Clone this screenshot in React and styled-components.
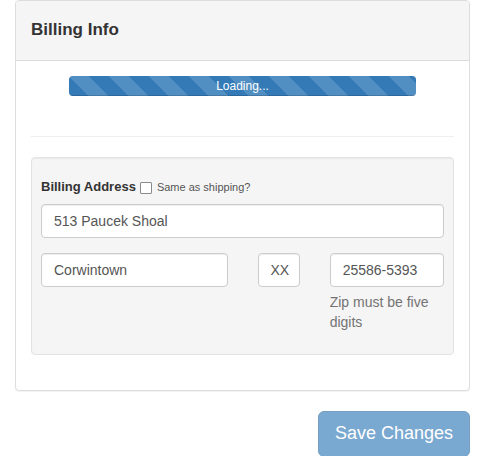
import React from 'react';
import styled, { createGlobalStyle } from 'styled-components';

const GlobalStyle = createGlobalStyle`
	* {
		box-sizing: border-box;
	}
	body {
		margin: 0;
		background: #fff;
		color: #333;
		font-family: 'Liberation Sans', Helvetica, Arial, sans-serif;
		font-size: 14px;
		line-height: 1.42857;
	}
`;

const Page = styled.div`
	padding: 0 15px;
`;

const Panel = styled.div`
	border: 1px solid #ddd;
	border-radius: 4px;
	background: #fff;
	box-shadow: 0 1px 1px rgba(0, 0, 0, 0.05);
	margin-bottom: 20px;
`;

const PanelHeading = styled.div`
	height: 60px;
	display: flex;
	align-items: center;
	padding: 0 15px;
	background: #f5f5f5;
	border-bottom: 1px solid #ddd;
	border-radius: 3px 3px 0 0;
`;

const PanelTitle = styled.h3`
	margin: 0;
	font-size: 17px;
	font-weight: bold;
	color: #333;
`;

const PanelBody = styled.div`
	padding: 15px;
`;

const Progress = styled.div`
	width: 347px;
	height: 20px;
	margin: 0 auto;
	border-radius: 4px;
	overflow: hidden;
	background: #f5f5f5;
	box-shadow: inset 0 1px 2px rgba(0, 0, 0, 0.1);
`;

const ProgressBar = styled.div`
	height: 100%;
	color: #fff;
	font-size: 12px;
	line-height: 20px;
	text-align: center;
	background-color: #337ab7;
	background-image: linear-gradient(
		45deg,
		rgba(255, 255, 255, 0.15) 25%,
		transparent 25%,
		transparent 50%,
		rgba(255, 255, 255, 0.15) 50%,
		rgba(255, 255, 255, 0.15) 75%,
		transparent 75%,
		transparent
	);
	background-size: 40px 40px;
	box-shadow: inset 0 -1px 0 rgba(0, 0, 0, 0.15);
`;

const Divider = styled.hr`
	margin: 40px 0 20px;
	border: 0;
	border-top: 1px solid #eee;
`;

const Well = styled.div`
	background: #f5f5f5;
	border: 1px solid #e3e3e3;
	border-radius: 4px;
	padding: 19px 9px 22px;
	margin-bottom: 20px;
	box-shadow: inset 0 1px 1px rgba(0, 0, 0, 0.05);
`;

const LabelRow = styled.div`
	display: flex;
	align-items: center;
	height: 20px;
	margin-bottom: 7px;
`;

const FieldLabel = styled.label`
	font-size: 13px;
	font-weight: bold;
	color: #333;
	margin-right: 4px;
`;

const Check = styled.input`
	appearance: none;
	width: 12px;
	height: 12px;
	margin: 1px 5px 0 0;
	border: 1px solid #8a8a8a;
	border-radius: 1px;
	background: #fff;
`;

const CheckText = styled.span`
	font-size: 11px;
	color: #555;
	padding-top: 1px;
`;

const Input = styled.input`
	display: block;
	width: 100%;
	height: 34px;
	padding: 6px ${(p) => (p.$tight ? 2 : 12)}px 6px 12px;
	font-family: inherit;
	font-size: 14px;
	color: #555;
	background: #fff;
	border: 1px solid #ccc;
	border-radius: 4px;
	box-shadow: inset 0 1px 1px rgba(0, 0, 0, 0.075);
	outline: none;
`;

const FormGroup = styled.div`
	margin-bottom: ${(p) => p.$mb ?? 15}px;
`;

const Row = styled.div`
	display: flex;
	margin: 0 -15px;
`;

const Col = styled.div`
	flex: 0 0 ${(p) => (p.$span / 12) * 100}%;
	padding: 0 15px;
`;

const HelpBlock = styled.div`
	margin-top: 5px;
	color: #737373;
	font-size: 14px;
	line-height: 20px;
`;

const Actions = styled.div`
	display: flex;
	justify-content: flex-end;
`;

const SaveButton = styled.button`
	padding: 10px 16px;
	font-family: inherit;
	font-size: 18px;
	line-height: 1.3333;
	color: #fff;
	background: #337ab7;
	border: 1px solid #2e6da4;
	border-radius: 6px;
	opacity: 0.65;
	cursor: not-allowed;
`;

const App = () => {
	return (
		<>
			<GlobalStyle />
			<Page>
				<Panel>
					<PanelHeading>
						<PanelTitle>Billing Info</PanelTitle>
					</PanelHeading>
					<PanelBody>
						<Progress>
							<ProgressBar>Loading...</ProgressBar>
						</Progress>
						<Divider />
						<Well>
							<LabelRow>
								<FieldLabel>Billing Address</FieldLabel>
								<Check type="checkbox" />
								<CheckText>Same as shipping?</CheckText>
							</LabelRow>
							<FormGroup>
								<Input defaultValue="513 Paucek Shoal" />
							</FormGroup>
							<FormGroup $mb={0}>
								<Row>
									<Col $span={6}>
										<Input defaultValue="Corwintown" />
									</Col>
									<Col $span={2}>
										<Input $tight defaultValue="XX" />
									</Col>
									<Col $span={4}>
										<Input defaultValue="25586-5393" />
										<HelpBlock>Zip must be five digits</HelpBlock>
									</Col>
								</Row>
							</FormGroup>
						</Well>
					</PanelBody>
				</Panel>
				<Actions>
					<SaveButton disabled>Save Changes</SaveButton>
				</Actions>
			</Page>
		</>
	);
};

export default App;
